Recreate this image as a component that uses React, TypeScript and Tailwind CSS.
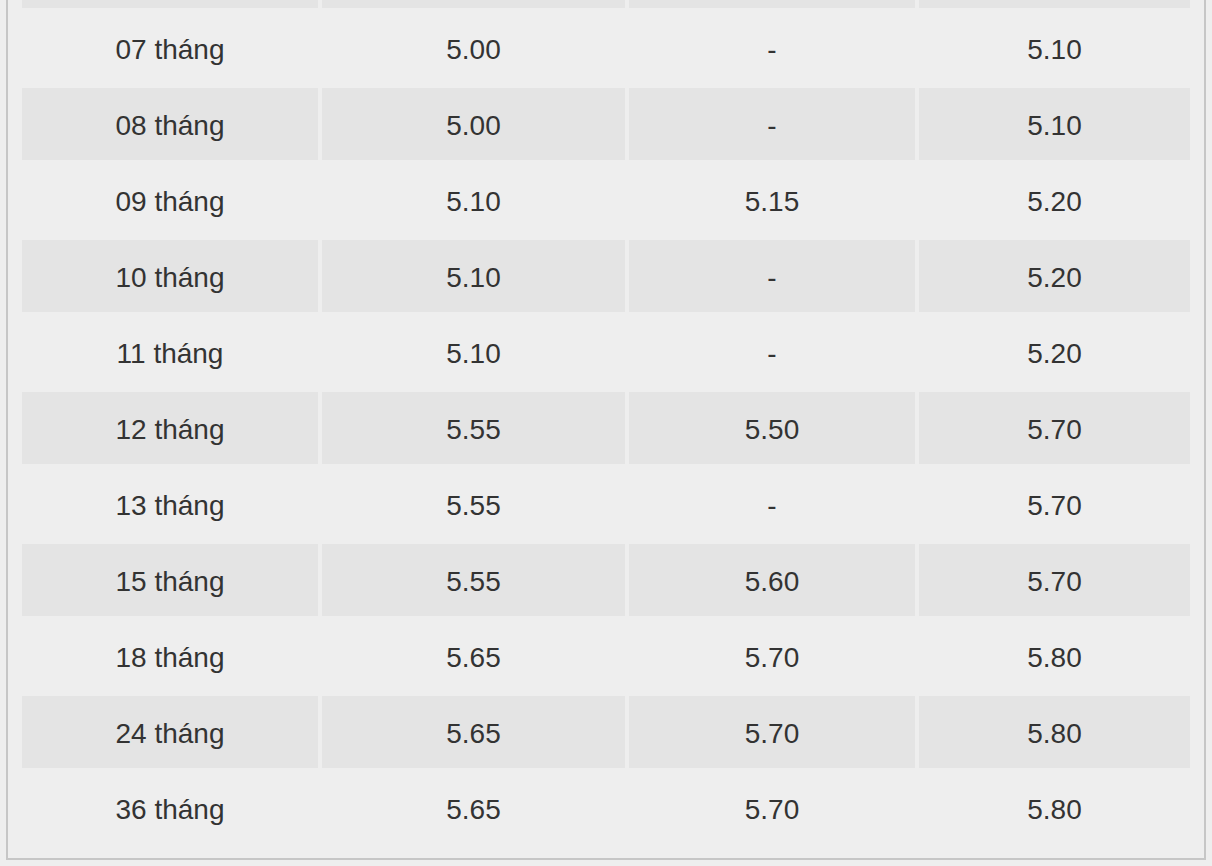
import React from 'react';

const rows: [string, string, string, string][] = [
  ['', '', '', ''],
  ['07 tháng', '5.00', '-', '5.10'],
  ['08 tháng', '5.00', '-', '5.10'],
  ['09 tháng', '5.10', '5.15', '5.20'],
  ['10 tháng', '5.10', '-', '5.20'],
  ['11 tháng', '5.10', '-', '5.20'],
  ['12 tháng', '5.55', '5.50', '5.70'],
  ['13 tháng', '5.55', '-', '5.70'],
  ['15 tháng', '5.55', '5.60', '5.70'],
  ['18 tháng', '5.65', '5.70', '5.80'],
  ['24 tháng', '5.65', '5.70', '5.80'],
  ['36 tháng', '5.65', '5.70', '5.80'],
];

export default function App() {
  return (
    <div
      className="w-[1212px] h-[866px] overflow-hidden bg-[#eeeeee] text-[#333333]"
      style={{ fontFamily: '"Liberation Sans", Arial, sans-serif' }}
    >
      <div className="ml-[6px] mt-[-80px] w-[1200px] border-2 border-[#c6c6c6] px-[14px] pt-[14px] pb-[14px]">
        <div className="grid grid-cols-[296px_303px_286px_271px] gap-[4px]">
          {rows.map((row, i) =>
            row.map((cell, j) => (
              <div
                key={`${i}-${j}`}
                className={`h-[72px] pt-[3px] flex items-center justify-center text-[28px] ${
                  i % 2 === 0 ? 'bg-[#e4e4e4]' : ''
                }`}
              >
                {cell}
              </div>
            )),
          )}
        </div>
      </div>
    </div>
  );
}
